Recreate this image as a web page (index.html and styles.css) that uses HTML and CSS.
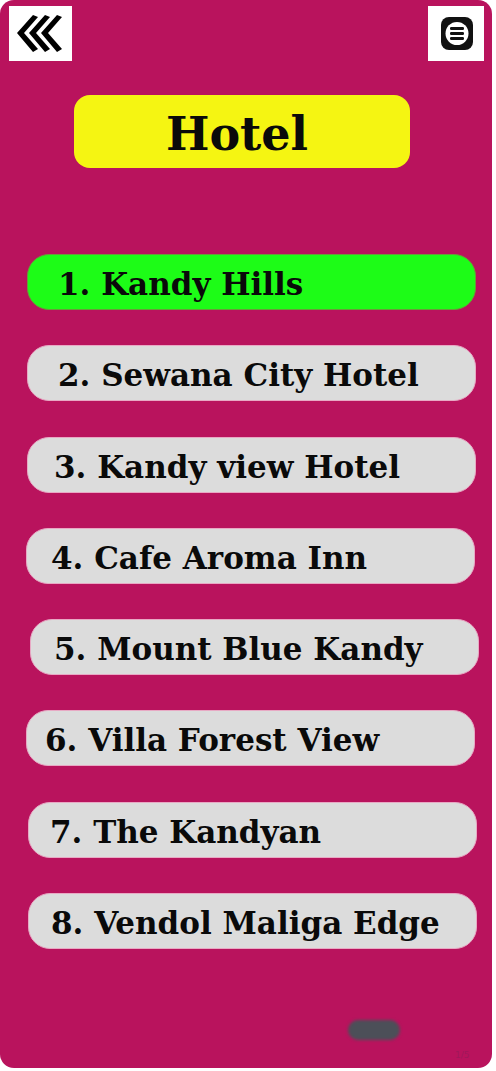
FILE: index.html
```html
<!DOCTYPE html>
<html>
<head>
<meta charset="utf-8">
<link rel="stylesheet" href="styles.css">
</head>
<body>
<div class="card">
  <div class="topbar">
    <div class="iconbox back">
      <svg width="63" height="55" viewBox="0 0 63 55">
        <polygon points="8,27 24,9 29,11 15,27 29,43 24,46" fill="#000"/>
        <polygon points="20,27 36,9 41,11 27,27 41,43 36,46" fill="#000"/>
        <polygon points="32,27 48,9 53,11 39,27 53,43 48,46" fill="#000"/>
      </svg>
    </div>
    <div class="iconbox menu">
      <svg width="56" height="55" viewBox="0 0 56 55">
        <rect x="13" y="11" width="32" height="33" rx="8" fill="#111"/>
        <circle cx="29" cy="27.5" r="11.5" fill="#fff"/>
        <rect x="22" y="21" width="14" height="3" rx="1.2" fill="#111"/>
        <rect x="22" y="26" width="14" height="3" rx="1.2" fill="#111"/>
        <rect x="22" y="31" width="14" height="3" rx="1.2" fill="#111"/>
      </svg>
    </div>
  </div>
  <div class="title">Hotel</div>
  <ul class="list">
    <li class="item active i1">1. Kandy Hills</li>
    <li class="item i2">2. Sewana City Hotel</li>
    <li class="item i3">3. Kandy view Hotel</li>
    <li class="item i4">4. Cafe Aroma Inn</li>
    <li class="item i5">5. Mount Blue Kandy</li>
    <li class="item i6">6. Villa Forest View</li>
    <li class="item i7">7. The Kandyan</li>
    <li class="item i8">8. Vendol Maliga Edge</li>
  </ul>
  <div class="footer">
    <div class="pager"></div>
    <div class="count">1/5</div>
  </div>
</div>
</body>
</html>
```

FILE: styles.css
```css
html, body {
  margin: 0;
  padding: 0;
  background: #ffffff;
}
body {
  font-family: "DejaVu Serif", "Liberation Serif", serif;
}
.card {
  width: 492px;
  height: 1068px;
  background: #b9135d;
  border-radius: 14px;
  display: flex;
  flex-direction: column;
  box-sizing: border-box;
}
.topbar {
  display: flex;
  justify-content: space-between;
  padding: 6px 8px 0 9px;
}
.iconbox {
  background: #ffffff;
  height: 55px;
  display: flex;
}
.back { width: 63px; }
.menu { width: 56px; }
.title {
  margin: 34px 0 0 74px;
  width: 336px;
  height: 73px;
  background: #f5f512;
  border-radius: 16px;
  display: flex;
  align-items: center;
  justify-content: center;
  font-weight: bold;
  font-size: 46px;
  color: #0a0a0a;
  box-sizing: border-box;
  padding: 4px 10px 0 0;
}
.list {
  list-style: none;
  margin: 86px 0 0 0;
  padding: 0;
  display: flex;
  flex-direction: column;
  gap: 35.3px;
}
.item {
  margin-left: 27px;
  width: 449px;
  height: 56px;
  box-sizing: border-box;
  background: #dcdcdc;
  border-radius: 22px;
  display: flex;
  align-items: center;
  padding-left: 30px;
  padding-top: 4px;
  font-weight: bold;
  font-size: 31px;
  color: #0a0a0a;
  white-space: nowrap;
  border: 1px solid #e8a9c4;
}
.item.active {
  background: #1dfc17;
  border-color: #6a9a3a;
}
.i3 { padding-left: 26px; }
.i4 { margin-left: 26px; padding-left: 24px; }
.i5 { margin-left: 30px; padding-left: 23px; }
.i6 { margin-left: 26px; padding-left: 18px; }
.i7 { margin-left: 28px; padding-left: 21px; }
.i8 { margin-left: 28px; padding-left: 22px; }
.footer {
  margin-top: auto;
  position: relative;
  height: 52px;
}
.pager {
  position: absolute;
  left: 348px;
  top: 4px;
  width: 52px;
  height: 20px;
  border-radius: 10px;
  background: #4c4f58;
  filter: blur(1.5px);
}
.count {
  position: absolute;
  left: 455px;
  top: 34px;
  font-family: "DejaVu Sans", sans-serif;
  font-size: 9px;
  color: #a0185a;
}
```
